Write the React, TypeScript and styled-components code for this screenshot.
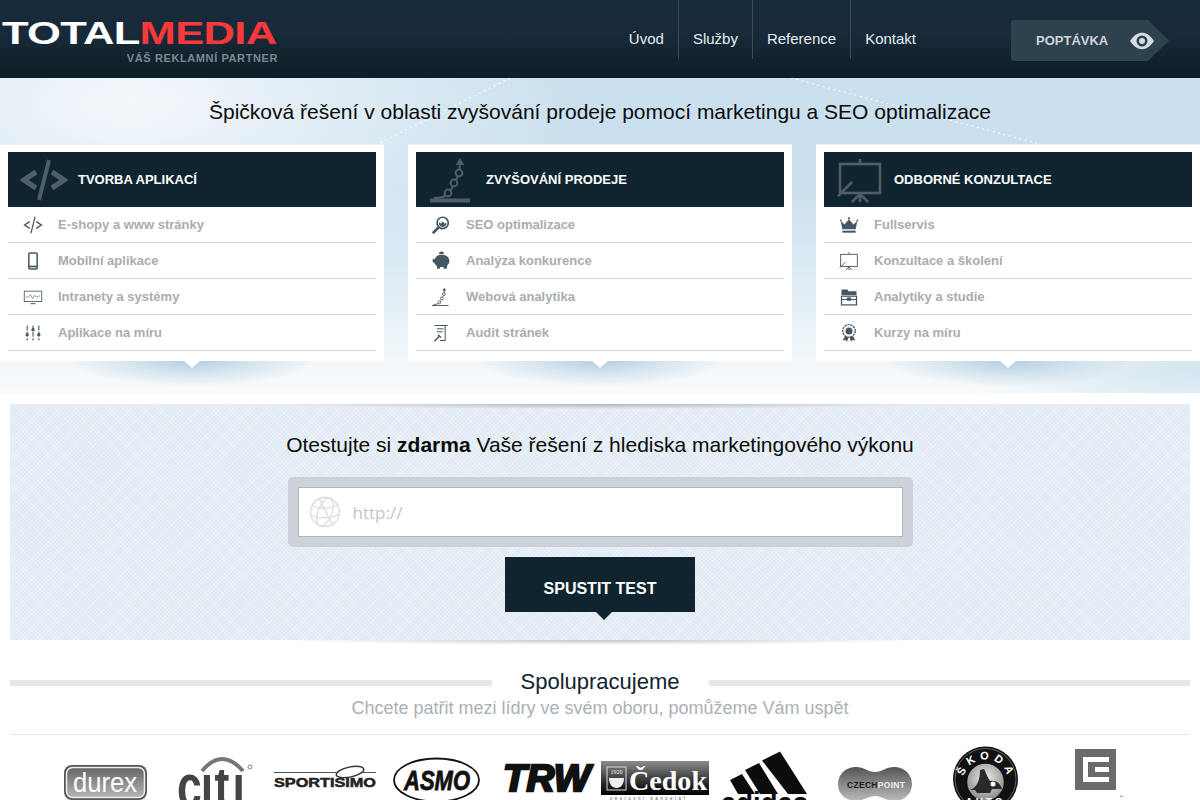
import React from "react";
import styled, { createGlobalStyle } from "styled-components";

const GlobalStyle = createGlobalStyle`
    html, body {
        margin: 0;
        padding: 0;
        background: #fff;
    }
    body {
        font-family: "Liberation Sans", Arial, sans-serif;
    }
    * {
        box-sizing: border-box;
    }
`;

type IconName =
    | "code" | "mobile" | "monitor" | "sliders"
    | "seo" | "piggy" | "chain" | "audit"
    | "crown" | "board" | "box" | "badge";

const Icon = ({ name, size }: { name: IconName; size: number }) => {
    const big = size > 30;
    return (
        <svg width={size} height={size} viewBox="0 0 24 24" fill="none" stroke="currentColor" strokeWidth={big ? 1.5 : 1.3}>
            {name === "code" && (
                <>
                    <path d="M8 8l-6 4 6 4M16 8l6 4-6 4" strokeWidth={big ? 2.6 : 1.7} />
                    <path d="M14.5 2L9.5 22" strokeWidth={big ? 2 : 1.5} />
                </>
            )}
            {name === "mobile" && (
                <>
                    <rect x="7" y="2.5" width="10" height="19" rx="1.2" strokeWidth="1.8" />
                    <path d="M7 18.6h10" strokeWidth="2" />
                </>
            )}
            {name === "monitor" && (
                <>
                    <rect x="1.5" y="5" width="21" height="12.5" strokeWidth="1" />
                    <path d="M3.5 12l3 0 2.5-3 2.5 5 2.5-4 2 2.5 2-1.5h2.5" strokeWidth=".7" />
                    <path d="M9 20h6" strokeWidth="1.2" />
                </>
            )}
            {name === "sliders" && (
                <>
                    <path d="M5 3v18M12 3v18M19 3v18" strokeWidth="1.3" strokeDasharray="6 1.6" />
                    <circle cx="5" cy="14" r="2" fill="currentColor" stroke="none" />
                    <circle cx="12" cy="8" r="2" fill="currentColor" stroke="none" />
                    <circle cx="19" cy="14" r="2" fill="currentColor" stroke="none" />
                </>
            )}
            {name === "seo" && (
                <>
                    <circle cx="14" cy="9.5" r="6.8" strokeWidth="2" />
                    <path d="M9.5 8.5l2.5 2 2-3 2.5 3 2-1.5v2.5a5 5 0 0 1-9 0z" fill="currentColor" stroke="none" />
                    <path d="M9 15l-6 6" strokeWidth="3" strokeLinecap="round" />
                </>
            )}
            {name === "piggy" && (
                <path
                    d="M4.500 9.500C6 6 9 4.500 13 4.500c5.500 0 9 3 9 7.500 0 2.500-1 4-2.500 5.200l-.5 4h-3.500l-.5-2h-4l-.5 2H7.500l-.7-3.500C5.500 16.500 4.500 15.500 4 14l-2-.5V10zM9.500 3.500a3 2.800 0 0 1 6 0z"
                    fill="currentColor"
                    stroke="none"
                />
            )}
            {name === "chain" && (
                <>
                    <path d="M1 22.200h20" strokeWidth={big ? 2 : 1.1} />
                    <path d="M3 21c5 0 7-1 9-5 2-3 4-7 4-13" strokeWidth="1" />
                    <circle cx="10" cy="18.500" r="1.700" fill={big ? "#10242f" : "#fff"} strokeWidth="1" />
                    <circle cx="13" cy="13.500" r="1.700" fill={big ? "#10242f" : "#fff"} strokeWidth="1" />
                    <circle cx="15.500" cy="8.500" r="1.700" fill={big ? "#10242f" : "#fff"} strokeWidth="1" />
                    <path d="M16 1l-2.200 3.500h4.400z" fill="currentColor" stroke="none" />
                </>
            )}
            {name === "audit" && (
                <>
                    <path d="M4 3h16M17 3.500V21h-6M7 7h8M7 10.500h7" strokeWidth="1.200" />
                    <path d="M4 22l6-6M8.500 14l3.500 3.500" strokeWidth="1.700" />
                </>
            )}
            {name === "crown" && (
                <>
                    <path d="M2 7l4.500 4.500L12 5l5.500 6.500L22 7l-2 10H4z" fill="currentColor" stroke="none" />
                    <path d="M4 20h16" strokeWidth="2.400" />
                    <circle cx="2" cy="6.500" r="1" fill="currentColor" stroke="none" />
                    <circle cx="12" cy="4" r="1.300" fill="currentColor" stroke="none" />
                    <circle cx="22" cy="6.500" r="1" fill="currentColor" stroke="none" />
                </>
            )}
            {name === "board" && (
                <>
                    <rect x="2" y="4" width="20" height="14.500" strokeWidth={big ? 1.300 : 1.100} />
                    <path d="M12 1.500V4M12 18.500V23M12 19l-4 4M12 19l4 4M1 20l7-7" strokeWidth={big ? 1.300 : 1.100} />
                </>
            )}
            {name === "box" && (
                <>
                    <path d="M3 3h7l1.500 2H21v4.500H3z" fill="currentColor" stroke="none" />
                    <rect x="3" y="11" width="18" height="10.500" strokeWidth="1.500" />
                    <path d="M3 15h18" strokeWidth="1.300" />
                    <rect x="9.500" y="12.500" width="5" height="4" fill="currentColor" stroke="none" />
                </>
            )}
            {name === "badge" && (
                <>
                    <circle cx="12" cy="9.500" r="7.500" strokeWidth="1.600" strokeDasharray="2.600 1" />
                    <circle cx="12" cy="9.500" r="4.200" fill="currentColor" stroke="none" />
                    <path d="M7 16l-2.500 5 3.500-.5 1.500 2 2-5.500M17 16l2.500 5-3.500-.5-1.500 2-2-5.500" fill="currentColor" stroke="none" />
                </>
            )}
        </svg>
    );
};

const columns: { title: string; icon: IconName; items: { label: string; icon: IconName }[] }[] = [
    {
        title: "TVORBA APLIKACÍ",
        icon: "code",
        items: [
            { label: "E-shopy a www stránky", icon: "code" },
            { label: "Mobilní aplikace", icon: "mobile" },
            { label: "Intranety a systémy", icon: "monitor" },
            { label: "Aplikace na míru", icon: "sliders" },
        ],
    },
    {
        title: "ZVYŠOVÁNÍ PRODEJE",
        icon: "chain",
        items: [
            { label: "SEO optimalizace", icon: "seo" },
            { label: "Analýza konkurence", icon: "piggy" },
            { label: "Webová analytika", icon: "chain" },
            { label: "Audit stránek", icon: "audit" },
        ],
    },
    {
        title: "ODBORNÉ KONZULTACE",
        icon: "board",
        items: [
            { label: "Fullservis", icon: "crown" },
            { label: "Konzultace a školení", icon: "board" },
            { label: "Analytiky a studie", icon: "box" },
            { label: "Kurzy na míru", icon: "badge" },
        ],
    },
];

const Logos = () => (
    <LogoRow>
        <svg viewBox="0 0 110 60" width="110" height="60">
            <defs>
                <linearGradient id="durexFill" x1="0" y1="0" x2="0" y2="1">
                    <stop offset="0" stopColor="#666" />
                    <stop offset="1" stopColor="#b5b5b5" />
                </linearGradient>
            </defs>
            <rect x="14" y="20" width="83" height="35" rx="8" fill="#555" />
            <rect x="16.500" y="22.500" width="78" height="30" rx="6" fill="url(#durexFill)" stroke="#eee" strokeWidth="1.500" />
            <text x="23" y="47" fontFamily="Liberation Sans" fontSize="27" textLength="64" lengthAdjust="spacingAndGlyphs" fill="#fff">durex</text>
        </svg>
        <svg viewBox="0 0 110 60" width="110" height="60">
            <defs>
                <clipPath id="citiClip">
                    <rect x="0" y="25" width="110" height="40" />
                </clipPath>
            </defs>
            <path d="M42 26Q62 2 83 26" fill="none" stroke="#777" strokeWidth="4" />
            <g clipPath="url(#citiClip)">
                <text transform="translate(17 62) scale(.72 1)" x="0 33 52 77" y="0" fontFamily="Liberation Sans" fontWeight="700" fontSize="62" fill="#444">citi</text>
            </g>
            <circle cx="90" cy="22" r="2" fill="none" stroke="#888" />
        </svg>
        <svg viewBox="0 0 110 60" width="110" height="60">
            <path d="M4 27.500h62M92 27.500h14" stroke="#555" strokeWidth="1.200" />
            <ellipse cx="80" cy="27" rx="14" ry="5" fill="none" stroke="#333" strokeWidth="1.500" transform="rotate(-12 80 27)" />
            <text x="4" y="42" fontFamily="Liberation Sans" fontWeight="700" fontSize="12.500" textLength="102" lengthAdjust="spacingAndGlyphs" fill="#222" stroke="#222" strokeWidth=".5">SPORTISIMO</text>
        </svg>
        <svg viewBox="0 0 110 60" width="110" height="60">
            <ellipse cx="56.500" cy="35" rx="42.500" ry="21.500" fill="#fff" stroke="#111" strokeWidth="1.800" />
            <text x="24" y="45" fontFamily="Liberation Sans" fontWeight="700" fontStyle="italic" fontSize="27" textLength="66" lengthAdjust="spacingAndGlyphs" fill="#111" stroke="#111" strokeWidth=".8">ASMO</text>
        </svg>
        <svg viewBox="0 0 110 60" width="110" height="60">
            <text x="13" y="46" fontFamily="Liberation Sans" fontWeight="700" fontStyle="italic" fontSize="37" textLength="87" lengthAdjust="spacingAndGlyphs" fill="#111" stroke="#111" strokeWidth="2.400">TRW</text>
        </svg>
        <svg viewBox="0 0 110 60" width="110" height="60">
            <defs>
                <linearGradient id="cedokFill" x1="0" y1="0" x2="0" y2="1">
                    <stop offset="0" stopColor="#8c8c8c" />
                    <stop offset=".7" stopColor="#222" />
                    <stop offset="1" stopColor="#000" />
                </linearGradient>
            </defs>
            <rect x="1" y="16" width="108" height="34" fill="url(#cedokFill)" />
            <rect x="7" y="22" width="19" height="23" fill="none" stroke="#ddd" strokeWidth="1" />
            <text x="16.500" y="29" textAnchor="middle" fontFamily="Liberation Serif" fontSize="6" fill="#eee">1920</text>
            <path d="M9 33h15c0 6-3 10-7.500 10S9 39 9 33z" fill="#eee" />
            <text x="29" y="45" fontFamily="Liberation Serif" fontWeight="700" fontSize="28" textLength="78" lengthAdjust="spacingAndGlyphs" fill="#fff">Čedok</text>
            <text x="10" y="55" fontFamily="Liberation Sans" fontSize="4.500" letterSpacing="2.500" fill="#555">cestovní kancelář</text>
        </svg>
        <svg viewBox="0 0 110 60" width="110" height="60">
            <path d="M52 15.500L70 6.500l27 42.500H78zM35 25l14-7 19 31H50zM20 35l12-6 13 20H28z" fill="#0c0c0c" />
            <text x="11" y="68" fontFamily="Liberation Sans" fontWeight="700" fontSize="29" textLength="87" lengthAdjust="spacingAndGlyphs" fill="#0c0c0c">adidas</text>
        </svg>
        <svg viewBox="0 0 110 60" width="110" height="60">
            <defs>
                <linearGradient id="czechFill" x1="0" y1="0" x2="0" y2="1">
                    <stop offset="0" stopColor="#555" />
                    <stop offset="1" stopColor="#bbb" />
                </linearGradient>
            </defs>
            <path d="M36 22c8 0 12 5 19 5s11-5 19-5c10 0 18 7 18 17s-8 17-18 17c-8 0-12-5-19-5s-11 5-19 5c-10 0-18-7-18-17s8-17 18-17z" fill="url(#czechFill)" />
            <text x="27" y="42.500" fontFamily="Liberation Sans" fontWeight="700" fontSize="8.500" letterSpacing=".3" fill="#222">CZECH<tspan fill="#eee">POINT</tspan></text>
        </svg>
        <svg viewBox="0 0 110 60" width="110" height="60">
            <defs>
                <path id="skodaArc" d="M33 37a22.500 22.500 0 0 1 45 0" />
                <radialGradient id="skodaFill" cx=".5" cy=".4" r=".7">
                    <stop offset="0" stopColor="#eee" />
                    <stop offset="1" stopColor="#777" />
                </radialGradient>
            </defs>
            <circle cx="55.500" cy="34" r="32.500" fill="#111" />
            <circle cx="55.500" cy="34" r="30.500" fill="none" stroke="#777" strokeWidth=".8" />
            <text fontFamily="Liberation Sans" fontWeight="700" fontSize="11" fill="#fff" letterSpacing="4.500" textAnchor="middle">
                <textPath href="#skodaArc" startOffset="52%">ŠKODA</textPath>
            </text>
            <circle cx="55.500" cy="37" r="19" fill="url(#skodaFill)" stroke="#111" strokeWidth="1.500" />
            <path d="M40 45c7-3 10-9 10-20l4-1c3 6 4 9 6 12 6-1 10 2 12 8H62l-2 4H47l-2-3z" fill="#2a2a2a" />
            <circle cx="63" cy="39" r="2.500" fill="#fff" />
            <text x="55.500" y="61" textAnchor="middle" fontFamily="Liberation Sans" fontWeight="700" fontSize="10" letterSpacing="3" fill="#fff">AUTO</text>
        </svg>
        <svg viewBox="0 0 110 60" width="110" height="60">
            <rect x="35" y="4" width="41" height="41" fill="#6b6b6b" />
            <path d="M43 12h26v5H48v15h21v5H43z" fill="#fff" />
            <rect x="55" y="22" width="14" height="5" fill="#fff" />
            <text x="80" y="57" fontFamily="Liberation Sans" fontSize="9" fill="#555">ˇ</text>
        </svg>
    </LogoRow>
);

export default function App() {
    return (
        <Page>
            <GlobalStyle />
            <Header>
                <Brand>
                    <BrandName>
                        TOTAL<BrandAccent>MEDIA</BrandAccent>
                    </BrandName>
                    <BrandTag>VÁŠ REKLAMNÍ PARTNER</BrandTag>
                </Brand>
                <Nav>
                    <NavLink>Úvod</NavLink>
                    <NavLink>Služby</NavLink>
                    <NavLink>Reference</NavLink>
                    <NavLink>Kontakt</NavLink>
                </Nav>
                <Inquiry>
                    POPTÁVKA
                    <svg width="26" height="18" viewBox="0 0 26 18">
                        <path d="M1 9C5 3 9 .8 13 .8S21 3 25 9c-4 6-8 8.200-12 8.200S5 15 1 9z" fill="#d5dde2" />
                        <circle cx="13" cy="9" r="5.500" fill="#2e414e" />
                        <circle cx="13" cy="9" r="3" fill="#d5dde2" />
                    </svg>
                </Inquiry>
            </Header>

            <Hero>
                <Dots viewBox="0 0 1200 66" width="1200" height="66">
                    <path d="M510 0L378 66M791 0L1040 66" stroke="#fff" strokeWidth="1.200" strokeDasharray="1.500 4" fill="none" />
                </Dots>
                <HeroTitle>Špičková řešení v oblasti zvyšování prodeje pomocí marketingu a SEO optimalizace</HeroTitle>
                <Cards>
                    {columns.map((col) => (
                        <Card key={col.title}>
                            <CardHead>
                                <CardHeadIcon>
                                    <Icon name={col.icon} size={48} />
                                </CardHeadIcon>
                                {col.title}
                            </CardHead>
                            {col.items.map((item) => (
                                <CardItem key={item.label}>
                                    <ItemIcon>
                                        <Icon name={item.icon} size={20} />
                                    </ItemIcon>
                                    {item.label}
                                </CardItem>
                            ))}
                        </Card>
                    ))}
                </Cards>
            </Hero>

            <TestBox>
                <TestTitle>
                    Otestujte si <strong>zdarma</strong> Vaše řešení z hlediska marketingového výkonu
                </TestTitle>
                <InputFrame>
                    <InputField>
                        <svg width="32" height="34" viewBox="0 0 32 34" fill="none" stroke="#dcdcdc" strokeWidth="1.300">
                            <circle cx="16" cy="17" r="14.500" />
                            <ellipse cx="16" cy="17" rx="7" ry="14.500" transform="rotate(20 16 17)" />
                            <path d="M3 11c8 3 18 3 26-1M2 20c8 4 20 4 28-1M10 3l14 28" />
                        </svg>
                        <UrlInput placeholder="http://" />
                    </InputField>
                </InputFrame>
                <RunButton>SPUSTIT TEST</RunButton>
            </TestBox>

            <Partners>
                <PartnersHead>Spolupracujeme</PartnersHead>
                <PartnersSub>Chcete patřit mezi lídry ve svém oboru, pomůžeme Vám uspět</PartnersSub>
                <Logos />
            </Partners>
        </Page>
    );
}

const Page = styled.div`
    width: 1200px;
    height: 800px;
    overflow: hidden;
`;

const Header = styled.header`
    height: 78px;
    display: flex;
    align-items: flex-start;
    padding: 0 31px 0 2px;
    background: linear-gradient(#172a39 0%, #182a39 45%, #13242f 70%, #0e1e29 100%);
`;

const Brand = styled.div`
    width: 276px;
    display: flex;
    flex-direction: column;
    padding-top: 17px;
`;

const BrandName = styled.div`
    width: 211px;
    font-size: 32px;
    line-height: 32px;
    font-weight: 700;
    letter-spacing: -0.5px;
    color: #fff;
    white-space: nowrap;
    transform: scaleX(1.36);
    transform-origin: left center;
`;

const BrandAccent = styled.span`
    color: #f7393b;
`;

const BrandTag = styled.div`
    align-self: flex-end;
    margin-top: 3px;
    font-size: 11px;
    line-height: 13px;
    font-weight: 700;
    letter-spacing: 0.6px;
    color: #7d8890;
    white-space: nowrap;
`;

const Nav = styled.nav`
    display: flex;
    margin-left: auto;
    margin-right: 81px;
`;

const NavLink = styled.a`
    height: 59px;
    padding: 30px 14px 0;
    font-size: 15px;
    line-height: 18px;
    color: #e6ecf0;
    border-right: 1px solid #3a4b58;

    &:last-child {
        border-right: none;
    }
`;

const Inquiry = styled.a`
    width: 158px;
    height: 41px;
    margin-top: 20px;
    display: flex;
    align-items: center;
    gap: 21px;
    padding-left: 25px;
    font-size: 13px;
    font-weight: 700;
    color: #cdd6dc;
    background: #2e414e;
    border-radius: 3px 0 0 3px;
    clip-path: polygon(0 0, 137px 0, 158px 50%, 137px 100%, 0 100%);
`;

const Hero = styled.section`
    position: relative;
    height: 315px;
    background:
        radial-gradient(240px 70px at 1200px 290px, #d3e5f0 0%, rgba(211, 229, 240, 0) 100%),
        linear-gradient(rgba(255, 255, 255, 0) 35%, rgba(255, 255, 255, 0.88) 100%),
        radial-gradient(440px 200px at 130px 25px, #f3f7fb 0%, rgba(243, 247, 251, 0) 100%),
        #cbe0ee;
`;

const Dots = styled.svg`
    position: absolute;
    top: 0;
    left: 0;
`;

const HeroTitle = styled.h1`
    position: relative;
    margin: 0;
    height: 66px;
    padding-top: 22px;
    font-size: 21px;
    line-height: 24px;
    font-weight: 400;
    text-align: center;
    color: #0b0b0b;
`;

const Cards = styled.div`
    display: grid;
    grid-template-columns: repeat(3, 384px);
    gap: 24px;
`;

const Card = styled.div`
    position: relative;
    height: 217px;
    padding: 8px;
    background: #fff;
    border-top: 1px solid #f1f1f1;

    &::before {
        content: "";
        position: absolute;
        top: 100%;
        left: 70px;
        right: 70px;
        height: 26px;
        background: radial-gradient(50% 100% at 50% 0, #b4cfe1 0%, rgba(180, 207, 225, 0.45) 50%, rgba(180, 207, 225, 0) 100%);
    }

    &::after {
        content: "";
        position: absolute;
        top: 100%;
        left: 184px;
        border-style: solid;
        border-width: 7px 8px 0;
        border-color: #fff transparent transparent;
    }
`;

const CardHead = styled.h2`
    height: 55px;
    margin: -1px 0 0;
    display: flex;
    align-items: center;
    font-size: 13px;
    font-weight: 700;
    color: #fff;
    background: #10242f;
`;

const CardHeadIcon = styled.span`
    width: 70px;
    display: flex;
    justify-content: center;
    padding-left: 2px;
    color: #4d5e68;
`;

const CardItem = styled.div`
    height: 36px;
    display: flex;
    align-items: center;
    font-size: 13px;
    font-weight: 700;
    color: #aaacae;
    border-bottom: 1px solid #d2d3d4;
`;

const ItemIcon = styled.span`
    width: 50px;
    display: flex;
    justify-content: center;
    color: #465662;
`;

const TestBox = styled.section`
    position: relative;
    height: 236px;
    margin: 11px 10px 0;
    display: flex;
    flex-direction: column;
    align-items: center;
    background-color: #e0eaf3;
    background-image:
        repeating-linear-gradient(45deg, rgba(255, 255, 255, 0.25) 0 1px, transparent 1px 3px),
        repeating-linear-gradient(-45deg, rgba(255, 255, 255, 0.25) 0 1px, transparent 1px 3px);

    &::before,
    &::after {
        content: "";
        position: absolute;
        left: 270px;
        right: 270px;
        height: 5px;
    }

    &::before {
        top: 0;
        background: radial-gradient(50% 100% at 50% 0, #b2b7bc 0%, rgba(178, 183, 188, 0) 100%);
    }

    &::after {
        top: 100%;
        background: radial-gradient(50% 100% at 50% 0, #c2c5c8 0%, rgba(194, 197, 200, 0) 100%);
    }
`;

const TestTitle = styled.h2`
    margin: 29px 0 0;
    font-size: 21px;
    line-height: 24px;
    font-weight: 400;
    color: #0b0b0b;

    strong {
        font-weight: 700;
    }
`;

const InputFrame = styled.div`
    width: 625px;
    height: 70px;
    margin-top: 20px;
    padding: 10px;
    background: #ccd2d7;
    border-radius: 5px;
`;

const InputField = styled.div`
    height: 50px;
    display: flex;
    align-items: center;
    gap: 10px;
    padding-left: 10px;
    background: #fff;
    border: 1px solid #b2b6b9;
`;

const UrlInput = styled.input`
    flex: 1;
    border: none;
    outline: none;
    background: transparent;
    font-family: "Open Sans", sans-serif;
    font-size: 17px;
    color: #ccc;

    &::placeholder {
        color: #c4c4c4;
        opacity: 1;
    }
`;

const RunButton = styled.button`
    position: relative;
    width: 190px;
    height: 55px;
    margin-top: 10px;
    padding: 9px 0 0;
    border: none;
    font-family: "Liberation Sans", Arial, sans-serif;
    font-size: 16px;
    font-weight: 700;
    color: #fff;
    background: #10242f;

    &::after {
        content: "";
        position: absolute;
        top: 100%;
        left: 91px;
        border-style: solid;
        border-width: 8px 8px 0;
        border-color: #10242f transparent transparent;
    }
`;

const Partners = styled.section`
    margin: 28px 10px 0;
`;

const PartnersHead = styled.h2`
    margin: 0;
    display: flex;
    align-items: center;
    gap: 29px;
    font-size: 22px;
    line-height: 28px;
    font-weight: 400;
    color: #10242f;

    &::before,
    &::after {
        content: "";
        flex: 1;
        height: 6px;
        margin-top: 1px;
        background: #e6e7e8;
    }
`;

const PartnersSub = styled.p`
    margin: -1px 0 0;
    height: 40px;
    font-size: 18px;
    line-height: 26px;
    text-align: center;
    color: #aab0b6;
    border-bottom: 1px solid #e6e7e8;
`;

const LogoRow = styled.div`
    margin: 10px 40px 0;
    display: grid;
    grid-template-columns: repeat(10, 110px);

    svg {
        display: block;
        overflow: visible;
    }
`;
